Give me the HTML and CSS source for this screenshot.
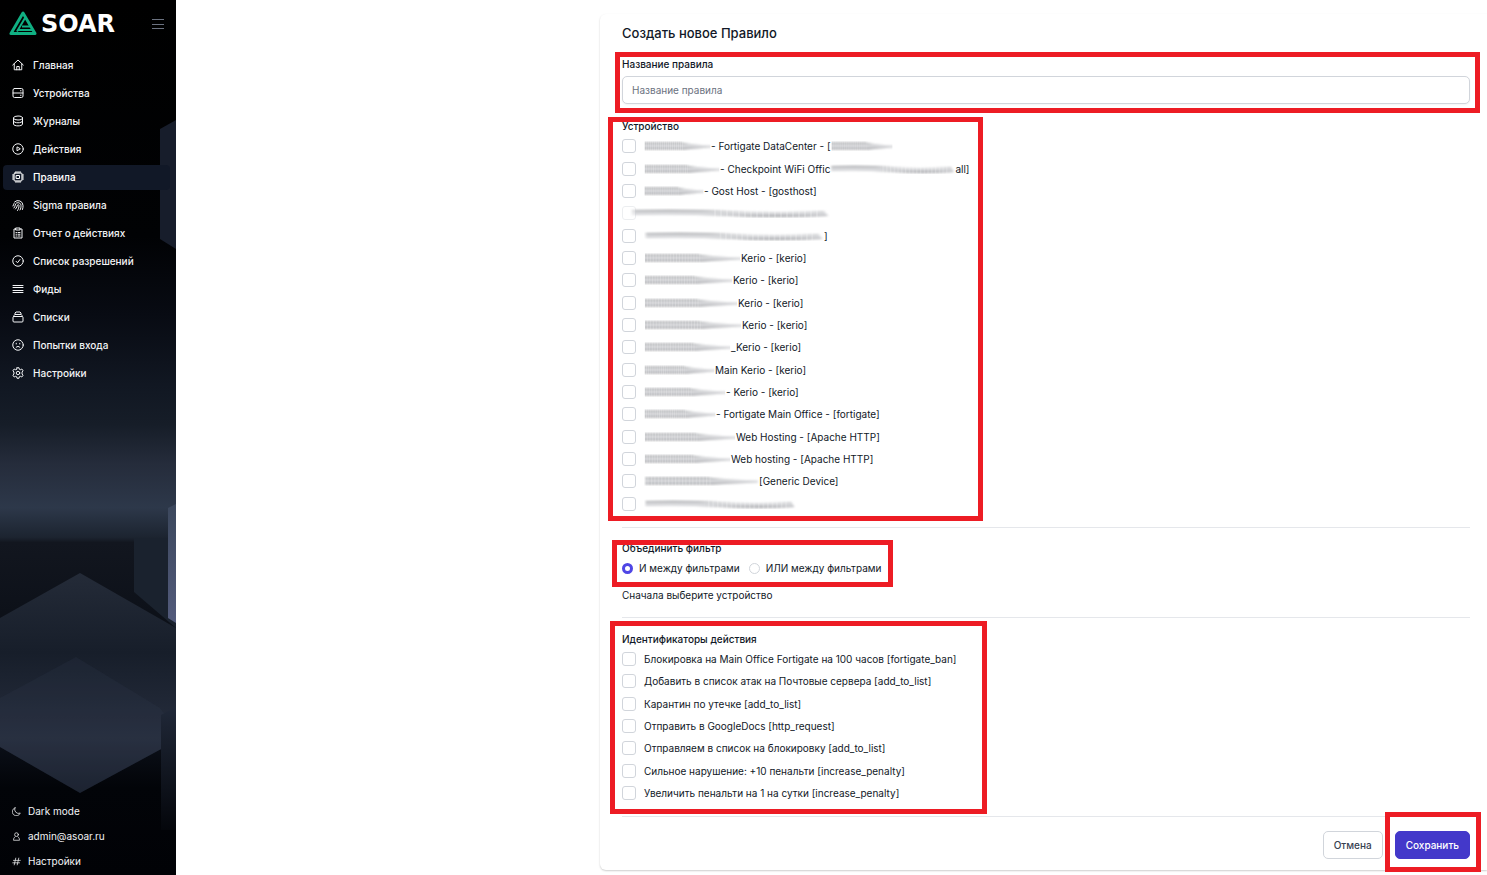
FILE: index.html
```html
<!DOCTYPE html>
<html lang="ru">
<head>
    <meta charset="UTF-8">
    <meta name="viewport" content="width=device-width, initial-scale=1.0">
    <title>ASOAR</title>
    <link rel="stylesheet" href="styles.css">
</head>
<body>
    <!-- Shared shapes -->
    <svg class="defs" width="0" height="0" aria-hidden="true">
        <defs>
            <linearGradient id="smear" x1="0" y1="0" x2="0" y2="1">
                <stop offset="0" stop-color="#8e9094"/>
                <stop offset="0.35" stop-color="#dedfe1"/>
                <stop offset="0.65" stop-color="#d2d3d6"/>
                <stop offset="1" stop-color="#96979b"/>
            </linearGradient>
            <pattern id="ticks" width="3" height="10" patternUnits="userSpaceOnUse">
                <rect width="1" height="10" fill="#fff" opacity="0.2"/>
            </pattern>
            <filter id="soft" x="-5%" y="-30%" width="110%" height="160%">
                <feGaussianBlur stdDeviation="0.8"/>
            </filter>
            <symbol id="smudge" viewBox="0 0 100 10" preserveAspectRatio="none">
                <path d="M1 1.500 L55 1.500 Q80 4 99 4.500 L99 6.500 Q80 7.500 60 8.500 L1 8.500 Z" fill="url(#smear)" filter="url(#soft)"/>
                <rect x="0" y="0" width="60" height="10" fill="url(#ticks)"/>
            </symbol>
            <symbol id="smudge-long" viewBox="0 0 100 10" preserveAspectRatio="none">
                <path d="M1 2 Q30 1 50 3 T97 3 L99 8 Q75 10 50 8 T1 7 Z" fill="url(#smear)" filter="url(#soft)"/>
                <rect x="40" y="0" width="55" height="10" fill="url(#ticks)"/>
            </symbol>
        </defs>
    </svg>

    <div class="layout">
        <aside class="sidebar">
            <svg class="backdrop" viewBox="0 0 176 875" preserveAspectRatio="none" aria-hidden="true">
                <defs>
                    <linearGradient id="sky" x1="0" y1="0" x2="0" y2="1">
                        <stop offset="0" stop-color="#000"/>
                        <stop offset="0.27" stop-color="#010204"/>
                        <stop offset="0.36" stop-color="#080b13"/>
                        <stop offset="0.44" stop-color="#111722"/>
                        <stop offset="0.485" stop-color="#161d28"/>
                        <stop offset="0.53" stop-color="#252c3b"/>
                        <stop offset="0.58" stop-color="#2d384a"/>
                        <stop offset="0.614" stop-color="#1c2430"/>
                        <stop offset="0.62" stop-color="#12161f"/>
                        <stop offset="0.7" stop-color="#0d1119"/>
                        <stop offset="0.85" stop-color="#0b0f18"/>
                        <stop offset="0.9" stop-color="#020408"/>
                        <stop offset="1" stop-color="#010206"/>
                    </linearGradient>
                    <linearGradient id="cube" x1="0" y1="0" x2="0" y2="1">
                        <stop offset="0" stop-color="#242b38"/>
                        <stop offset="0.36" stop-color="#171e2a"/>
                        <stop offset="0.75" stop-color="#262d3d"/>
                        <stop offset="1" stop-color="#171d29"/>
                    </linearGradient>
                    <linearGradient id="slab" x1="0" y1="0" x2="0" y2="1">
                        <stop offset="0" stop-color="#3b475c"/>
                        <stop offset="1" stop-color="#535b7c"/>
                    </linearGradient>
                    <linearGradient id="fade" x1="0" y1="0" x2="0" y2="1">
                        <stop offset="0" stop-color="#202838"/>
                        <stop offset="1" stop-color="#04060b"/>
                    </linearGradient>
                </defs>
                <rect width="176" height="875" fill="url(#sky)"/>
                <polygon points="160,129 176,120 176,249 160,239" fill="#171d2b"/>
                <polygon points="134,538 176,538 176,628 134,592" fill="#1a222e"/>
                <polygon points="80,573 176,628 176,741 80,793 0,747 0,618" fill="url(#cube)"/>
                <polygon points="76,657 160,708 176,730 176,741 80,793 0,747 0,698" fill="#303a50" opacity="0.2"/>
                <polygon points="168,508 176,504 176,623 168,618" fill="url(#slab)"/>
                <polygon points="161,715 176,707 176,830 161,830" fill="url(#fade)"/>
            </svg>

            <header class="brand">
                <svg class="brand-mark" viewBox="0 0 28 25" aria-hidden="true">
                    <path d="M14 2 L2 22.500 H26 Z"/>
                    <path d="M16 7 L8 20.500 M13 15.500 H21 M9 19 H23"/>
                </svg>
                <span class="brand-name">SOAR</span>
                <button class="burger" type="button" aria-label="Меню">
                    <svg viewBox="0 0 14 12"><path d="M1 1.500h12M1 6.500h12M1 10.500h12"/></svg>
                </button>
            </header>

            <nav class="menu">
                <a href="#"><svg viewBox="0 0 24 24"><path d="M1.500 12 12 2l10.500 10M4.500 10v11.500h15V10M9.500 21.500V15h5v6.500"/></svg>Главная</a>
                <a href="#"><svg viewBox="0 0 24 24"><rect x="2" y="3" width="20" height="18" rx="3"/><path d="M2 12h20M17 7.500h1M17 16.500h1"/></svg>Устройства</a>
                <a href="#"><svg viewBox="0 0 24 24"><ellipse cx="12" cy="6" rx="9" ry="4"/><path d="M3 6v12c0 5 18 5 18 0V6M3 12c0 5 18 5 18 0"/></svg>Журналы</a>
                <a href="#"><svg viewBox="0 0 24 24"><circle cx="12" cy="12" r="10.500"/><path d="M10 8.500v7l6-3.500z"/></svg>Действия</a>
                <a class="active" href="#"><svg viewBox="0 0 24 24"><rect x="4" y="4" width="16" height="16" rx="2"/><rect x="9" y="9" width="6" height="6"/><path d="M8 1v3M12 1v3M16 1v3M8 20v3M12 20v3M16 20v3M1 8h3M1 12h3M1 16h3M20 8h3M20 12h3M20 16h3"/></svg>Правила</a>
                <a href="#"><svg viewBox="0 0 24 24"><path d="M5 6a10 10 0 0 1 17 7c0 3 0 5-1 8M2 14c1-2 1-3 2-5M4 18c3-3 2-9 5-10 5-2 9 1 9 5 0 3 0 6-2 9M7 20c3-3 3-6 4-8 1-1 3-1 3 1 0 4-1 7-3 10"/></svg>Sigma правила</a>
                <a href="#"><svg viewBox="0 0 24 24"><path d="M8 4H4v18h16V4h-4M8 2h8v4H8zM8 11h1M12 11h4M8 14.500h1M12 14.500h4M8 18h1M12 18h4"/></svg>Отчет о действиях</a>
                <a href="#"><svg viewBox="0 0 24 24"><circle cx="12" cy="12" r="10.500"/><path d="m8 12.500 3 3 5-6.500"/></svg>Список разрешений</a>
                <a href="#"><svg viewBox="0 0 24 24"><path d="M2 5h20M2 9h20M2 15h20M2 19h20"/></svg>Фиды</a>
                <a href="#"><svg viewBox="0 0 24 24"><rect x="2" y="11" width="20" height="11" rx="2"/><path d="M4 11V9l2-2h12l2 2v2M6 7V4l2-2h8l2 2v3"/></svg>Списки</a>
                <a href="#"><svg viewBox="0 0 24 24"><circle cx="12" cy="12" r="10.500"/><path d="M8 17c2-3 6-3 8 0M8.500 8.500v1.500M15.500 8.500v1.500"/></svg>Попытки входа</a>
                <a href="#"><svg viewBox="0 0 24 24"><path d="m10 1.500h4l.6 3 2 1 3-1.500 2.500 3.500-2 2.500v4l2 2.500-2.500 3.500-3-1.500-2 1-.6 3h-4l-.6-3-2-1-3 1.500-2.500-3.500 2-2.500v-4l-2-2.500 2.500-3.500 3 1.500 2-1z"/><circle cx="12" cy="12" r="3.500"/></svg>Настройки</a>
            </nav>

            <nav class="menu-bottom">
                <a href="#"><svg viewBox="0 0 24 24"><path d="M8 2a10.500 10.500 0 0 0 14 14A11 11 0 1 1 8 2z"/></svg>Dark mode</a>
                <a href="#"><svg viewBox="0 0 24 24"><circle cx="12" cy="7" r="5"/><path d="M8 13c-3 2-4 5-4 9h16c0-4-1-7-4-9"/></svg>admin@asoar.ru</a>
                <a href="#"><svg viewBox="0 0 24 24"><path d="M10 3 6 21M18 3l-4 18M4 9h18M2 15.500h18"/></svg>Настройки</a>
            </nav>
        </aside>

        <main class="content">
            <form class="card">
                <h1>Создать новое Правило</h1>

                <div class="mark mark-name">
                    <label class="caption" for="rule-name">Название правила</label>
                    <input class="text-input" id="rule-name" type="text" placeholder="Название правила">
                </div>

                <div class="devices mark mark-devices" role="group" aria-labelledby="devices-caption">
                    <div class="caption" id="devices-caption">Устройство</div>
                    <div class="checks checks-devices">
                        <label><input type="checkbox"><svg class="smudge" width="67"><use href="#smudge"/></svg>- Fortigate DataCenter - [<svg class="smudge" width="62"><use href="#smudge"/></svg></label>
                        <label><input type="checkbox"><svg class="smudge" width="76"><use href="#smudge"/></svg>- Checkpoint WiFi Offic<svg class="smudge" width="125"><use href="#smudge-long"/></svg>all]</label>
                        <label><input type="checkbox"><svg class="smudge" width="60"><use href="#smudge"/></svg>- Gost Host - [gosthost]</label>
                        <label class="faded"><input type="checkbox"><svg class="smudge" width="200"><use href="#smudge-long"/></svg></label>
                        <label><input type="checkbox"><svg class="smudge" width="180"><use href="#smudge-long"/></svg>]</label>
                        <label><input type="checkbox"><svg class="smudge" width="97"><use href="#smudge"/></svg>Kerio - [kerio]</label>
                        <label><input type="checkbox"><svg class="smudge" width="89"><use href="#smudge"/></svg>Kerio - [kerio]</label>
                        <label><input type="checkbox"><svg class="smudge" width="94"><use href="#smudge"/></svg>Kerio - [kerio]</label>
                        <label><input type="checkbox"><svg class="smudge" width="98"><use href="#smudge"/></svg>Kerio - [kerio]</label>
                        <label><input type="checkbox"><svg class="smudge" width="87"><use href="#smudge"/></svg>_Kerio - [kerio]</label>
                        <label><input type="checkbox"><svg class="smudge" width="71"><use href="#smudge"/></svg>Main Kerio - [kerio]</label>
                        <label><input type="checkbox"><svg class="smudge" width="82"><use href="#smudge"/></svg>- Kerio - [kerio]</label>
                        <label><input type="checkbox"><svg class="smudge" width="72"><use href="#smudge"/></svg>- Fortigate Main Office - [fortigate]</label>
                        <label><input type="checkbox"><svg class="smudge" width="92"><use href="#smudge"/></svg>Web Hosting - [Apache HTTP]</label>
                        <label><input type="checkbox"><svg class="smudge" width="87"><use href="#smudge"/></svg>Web hosting - [Apache HTTP]</label>
                        <label><input type="checkbox"><svg class="smudge" width="115"><use href="#smudge"/></svg>[Generic Device]</label>
                        <label><input type="checkbox"><svg class="smudge" width="152"><use href="#smudge-long"/></svg></label>
                    </div>
                </div>

                <hr>

                <div class="mark mark-filter" role="radiogroup" aria-labelledby="filter-caption">
                    <div class="caption" id="filter-caption">Объединить фильтр</div>
                    <div class="radios">
                        <label><input type="radio" name="join" checked>И между фильтрами</label>
                        <label><input type="radio" name="join">ИЛИ между фильтрами</label>
                    </div>
                </div>
                <p class="hint">Сначала выберите устройство</p>

                <hr>

                <div class="actions mark mark-actions" role="group" aria-labelledby="actions-caption">
                    <div class="caption" id="actions-caption">Идентификаторы действия</div>
                    <div class="checks checks-actions">
                        <label><input type="checkbox">Блокировка на Main Office Fortigate на 100 часов [fortigate_ban]</label>
                        <label><input type="checkbox">Добавить в список атак на Почтовые сервера [add_to_list]</label>
                        <label><input type="checkbox">Карантин по утечке [add_to_list]</label>
                        <label><input type="checkbox">Отправить в GoogleDocs [http_request]</label>
                        <label><input type="checkbox">Отправляем в список на блокировку [add_to_list]</label>
                        <label><input type="checkbox">Сильное нарушение: +10 пенальти [increase_penalty]</label>
                        <label><input type="checkbox">Увеличить пенальти на 1 на сутки [increase_penalty]</label>
                    </div>
                </div>

                <hr>

                <div class="buttons">
                    <button class="btn" type="button">Отмена</button>
                    <div class="mark mark-save">
                        <button class="btn btn-primary" type="submit">Сохранить</button>
                    </div>
                </div>
            </form>
        </main>
    </div>
</body>
</html>
```
FILE: styles.css
```css
*,
*::after {
    box-sizing: border-box;
}
body {
    margin: 0;
    font-family: Inter, "Liberation Sans", sans-serif;
    font-size: 10px;
    line-height: 16px;
    color: #111827;
    background-color: #fff;
}
.defs {
    position: absolute;
}
.layout {
    display: flex;
    min-height: 100vh;
}

/* Sidebar */
.sidebar {
    position: relative;
    flex: 0 0 176px;
    display: flex;
    flex-direction: column;
    background-color: #000;
    color: #f3f4f6;
}
.backdrop {
    position: absolute;
    top: 0;
    left: 0;
    width: 100%;
    height: 100%;
}
.brand,
.menu,
.menu-bottom {
    position: relative;
}
.brand {
    display: flex;
    align-items: center;
    height: 47px;
    padding: 0 11px 0 9px;
}
.brand-mark {
    width: 28px;
    height: 25px;
    fill: none;
    stroke: #10b083;
    stroke-width: 3;
    stroke-linejoin: round;
}
.brand-mark path + path {
    stroke-width: 2;
}
.brand-name {
    margin-left: 4px;
    font-family: "DejaVu Sans", sans-serif;
    font-size: 24px;
    font-weight: bold;
    line-height: 24px;
    color: #fff;
}
.burger {
    display: flex;
    margin-left: auto;
    padding: 0;
    border: 0;
    background: none;
    cursor: pointer;
}
.burger svg {
    width: 14px;
    height: 12px;
    fill: none;
    stroke: #6b7280;
}
.menu {
    display: flex;
    flex-direction: column;
    gap: 3px;
    padding: 6px 6px 0 3px;
}
.menu a,
.menu-bottom a {
    display: flex;
    align-items: center;
    height: 25px;
    padding: 0 9px 1px;
    border-radius: 4px;
    color: inherit;
    font-weight: 500;
    text-decoration: none;
}
.menu a {
    gap: 9px;
}
.menu .active {
    background-color: #111827;
    color: #fff;
}
.menu svg,
.menu-bottom svg {
    width: 12px;
    height: 12px;
    fill: none;
    stroke: currentColor;
    stroke-width: 2;
    stroke-linecap: round;
    stroke-linejoin: round;
}
.menu-bottom {
    margin-top: auto;
    padding: 0 3px 1px;
}
.menu-bottom a {
    gap: 7px;
    font-weight: 400;
}
.menu-bottom svg {
    width: 9px;
    height: 9px;
}

/* Form */
.content {
    flex: 1;
    min-width: 0;
    padding: 14px 0 5px 424px;
}
.card {
    padding: 10px 17px 11px 22px;
    border-radius: 6px 0 0 6px;
    box-shadow: 0 1px 2px rgba(0, 0, 0, 0.2);
}
h1 {
    margin: 0 0 14px;
    font-size: 13px;
    font-weight: 500;
    line-height: 18px;
}
hr {
    margin: 12px 0;
    border: 0;
    border-top: 1px solid #e5e7eb;
}
.caption {
    font-weight: 500;
}
.text-input {
    display: block;
    width: 100%;
    height: 28px;
    margin-top: 4px;
    padding: 0 9px 1px;
    border: 1px solid #d1d5db;
    border-radius: 5px;
    font: inherit;
    color: inherit;
    box-shadow: 0 1px 2px rgba(0, 0, 0, 0.05);
}
.text-input::placeholder {
    color: #6b7280;
}
.devices {
    margin-top: 14px;
}
.actions {
    margin-top: 13px;
}
.checks {
    display: grid;
    grid-auto-rows: 1fr;
    margin-top: 1px;
}
.checks-devices {
    min-height: 380px;
}
.checks-actions {
    min-height: 156px;
}
.checks label,
.radios label {
    display: flex;
    align-items: center;
    white-space: pre;
}
input[type="checkbox"],
input[type="radio"] {
    flex: none;
    appearance: none;
    margin: 0;
    border: 1px solid #d1d5db;
    background-color: #fff;
}
input[type="checkbox"] {
    width: 14px;
    height: 14px;
    margin-right: 8px;
    border-radius: 3px;
}
input[type="checkbox"]:checked {
    border-color: #4f46e5;
    background-color: #4f46e5;
}
input[type="radio"] {
    width: 11px;
    height: 11px;
    margin-right: 6px;
    border-radius: 50%;
}
input[type="radio"]:checked {
    border: 3px solid #4f46e5;
}
.smudge {
    flex: none;
    height: 10px;
}
.faded input {
    opacity: 0.4;
}
.faded .smudge {
    margin-left: -14px;
}
.radios {
    display: flex;
    gap: 9px;
    margin-top: 4px;
}
.hint {
    margin: 11px 0 14px;
}
.buttons {
    display: flex;
    justify-content: flex-end;
    gap: 12px;
    margin-top: 14px;
}
.btn {
    display: block;
    height: 28px;
    padding: 0 10px;
    border: 1px solid #d1d5db;
    border-radius: 5px;
    background-color: #fff;
    color: #374151;
    font: inherit;
    font-weight: 500;
    cursor: pointer;
}
.btn-primary {
    border-color: #4338ca;
    background-color: #4338ca;
    color: #fff;
}

/* Red frames over the parts of the form */
.mark {
    position: relative;
}
.mark::after {
    content: "";
    position: absolute;
    border: 5px solid #ed1c24;
    pointer-events: none;
}
.mark-name::after {
    inset: -4px -10px -9px -7px;
}
.mark-devices::after {
    inset: -1px auto -6px -14px;
    width: 375px;
}
.mark-filter::after {
    inset: 0 auto -11px -10px;
    width: 281px;
}
.mark-actions::after {
    inset: -10px auto -10px -12px;
    width: 377px;
}
.mark-save::after {
    inset: -19px -11px -13px -10px;
}
```
